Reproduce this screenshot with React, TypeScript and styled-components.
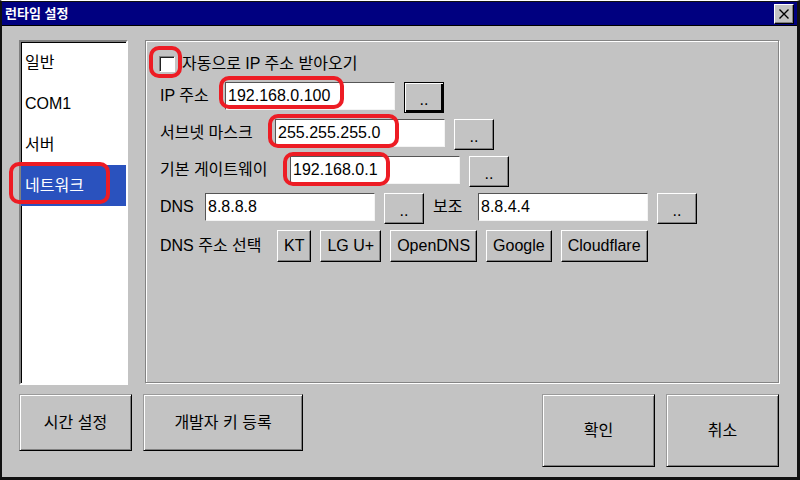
import styled, { createGlobalStyle } from 'styled-components';

const GlobalStyle = createGlobalStyle`
    html, body {
        margin: 0;
        padding: 0;
        background: #c3c3c3;
    }
    body {
        font-family: 'Liberation Sans', 'Noto Sans CJK KR', sans-serif;
        font-size: 16px;
        color: #000;
    }
    * {
        box-sizing: border-box;
    }
`;

const RED = '#ed1c24';

interface IMarkProps {
    $l: number; // left offset in px
    $t: number; // top offset in px
    $w: number;
    $h: number;
}

interface IWidthProps {
    $w: number;
}

interface IFocusProps {
    $focused?: boolean;
}

const Window = styled.div`
    width: 800px;
    height: 480px;
    display: flex;
    flex-direction: column;

    background: #c3c3c3;
    border-top: 1px solid #fff;
    border-left: 2px solid #111;
    border-right: 3px solid #111;
    border-bottom: 3px solid #111;
    overflow: hidden;
`;

const TitleBar = styled.div`
    height: 25px;
    flex: none;
    display: flex;
    align-items: center;
    justify-content: space-between;

    padding: 0 3px 0 3px;
    background: #000080;
    border-top: 1px solid #111;
    border-bottom: 1px solid #000;
`;

const Title = styled.span`
    color: #fff;
    font-size: 13px;
    font-weight: bold;
    line-height: 16px;
`;

const CloseButton = styled.button`
    width: 20px;
    height: 20px;
    padding: 0;
    display: flex;
    align-items: center;
    justify-content: center;

    background: #c3c3c3;
    border: 1px solid;
    border-color: #fff #000 #000 #fff;
    box-shadow: inset -1px -1px 0 #808080;
`;

const Body = styled.div`
    flex: 1;
    display: flex;
    flex-direction: column;
    gap: 9px;
    padding: 14px 18px 10px 17px;
`;

const Main = styled.div`
    display: flex;
    gap: 17px;
    align-items: flex-start;
`;

const ListBox = styled.ul`
    width: 109px;
    height: 345px;
    margin: 0;
    padding: 0;
    list-style: none;

    background: #fff;
    border: 2px solid;
    border-color: #808080 #fff #fff #808080;
    box-shadow: inset 1px 1px 0 #000;
`;

const ListItem = styled.li<{ $selected?: boolean }>`
    position: relative;
    height: 41px;
    display: flex;
    align-items: center;
    padding-left: 4px;

    background: ${({ $selected }) => ($selected ? '#2a52be' : 'transparent')};
    color: ${({ $selected }) => ($selected ? '#fff' : '#000')};
    line-height: 20px;
`;

const Panel = styled.div`
    width: 634px;
    height: 343px;
    display: flex;
    flex-direction: column;
    gap: 6px;

    padding: 8px 14px;
    border: 1px solid #848484;
    box-shadow: 1px 1px 0 #fff, inset 1px 1px 0 #fff;
`;

const CheckRow = styled.label`
    height: 30px;
    display: flex;
    align-items: center;
    gap: 7px;
    margin-bottom: -3px;
    line-height: 20px;
`;

const CheckWrap = styled.span`
    position: relative;
    display: flex;
    margin-left: -1px;
`;

const CheckBox = styled.span`
    width: 16px;
    height: 16px;
    background: #fff;
    border: 1px solid;
    border-color: #808080 #fff #fff #808080;
    box-shadow: inset 1px 1px 0 #222;
`;

const Row = styled.div`
    height: 31px;
    display: flex;
    align-items: flex-start;
    gap: 9px;
`;

const Label = styled.span<IWidthProps>`
    width: ${({ $w }) => $w}px;
    flex: none;
    line-height: 28px;
    white-space: nowrap;
`;

const Field = styled.div`
    position: relative;
    display: flex;
`;

const TextBox = styled.div`
    width: 170px;
    height: 28px;
    padding: 0 2px;
    line-height: 26px;

    background: #fff;
    border: 1px solid;
    border-color: #555 #f4f4f4 #f4f4f4 #555;
    white-space: nowrap;
`;

const Mark = styled.span<IMarkProps>`
    position: absolute;
    left: ${({ $l }) => $l}px;
    top: ${({ $t }) => $t}px;
    width: ${({ $w }) => $w}px;
    height: ${({ $h }) => $h}px;

    border: 4px solid ${RED};
    border-radius: 10px;
    pointer-events: none;
`;

const SmallButton = styled.button<IFocusProps>`
    width: 40px;
    height: 31px;
    padding: 0 0 4px;
    display: flex;
    align-items: flex-end;
    justify-content: center;

    font: inherit;
    line-height: 16px;
    background: #c3c3c3;
    border: 1px solid;
    border-color: ${({ $focused }) => ($focused ? '#000' : '#fff #000 #000 #fff')};
    box-shadow: ${({ $focused }) =>
        $focused ? 'inset 1px 1px 0 #fff, inset -2px -2px 0 #000' : 'inset -1px -1px 0 #808080'};
`;

const ChoiceButton = styled.button`
    height: 32px;
    padding: 0 6px;
    display: flex;
    align-items: center;

    font: inherit;
    line-height: 20px;
    background: #c3c3c3;
    border: 1px solid;
    border-color: #fff #000 #000 #fff;
    box-shadow: inset -1px -1px 0 #808080;
`;

const Footer = styled.div`
    display: flex;
    align-items: flex-start;
    gap: 11px;
`;

const Spacer = styled.div`
    flex: 1;
`;

const BigButton = styled.button<{ $w: number; $h: number }>`
    width: ${({ $w }) => $w}px;
    height: ${({ $h }) => $h}px;
    padding: 0;

    font: inherit;
    line-height: 20px;
    background: #c3c3c3;
    border: 1px solid;
    border-color: #9a9a9a #000 #000 #9a9a9a;
    box-shadow: inset 1px 1px 0 #fff, inset -1px -1px 0 #808080;
`;

const CloseIcon = () => (
    <svg width="12" height="12" viewBox="0 0 12 12">
        <path d="M1.5 1.5 L10.5 10.5 M10.5 1.5 L1.5 10.5" stroke="#000" strokeWidth="1.4" fill="none" />
    </svg>
);

const listItems = ['일반', 'COM1', '서버', '네트워크'];

const dnsPresets = ['KT', 'LG U+', 'OpenDNS', 'Google', 'Cloudflare'];

export default function App() {
    return (
        <>
            <GlobalStyle />
            <Window>
                <TitleBar>
                    <Title>런타임 설정</Title>
                    <CloseButton aria-label="닫기">
                        <CloseIcon />
                    </CloseButton>
                </TitleBar>

                <Body>
                    <Main>
                        <ListBox>
                            {listItems.map((item) => (
                                <ListItem key={item} $selected={item === '네트워크'}>
                                    {item}
                                    {item === '네트워크' && <Mark $l={-12} $t={-3} $w={101} $h={42} />}
                                </ListItem>
                            ))}
                        </ListBox>

                        <Panel>
                            <CheckRow>
                                <CheckWrap>
                                    <CheckBox />
                                    <Mark $l={-10} $t={-10} $w={33} $h={32} />
                                </CheckWrap>
                                자동으로 IP 주소 받아오기
                            </CheckRow>

                            <Row>
                                <Label $w={56}>IP 주소</Label>
                                <Field>
                                    <TextBox>192.168.0.100</TextBox>
                                    <Mark $l={-6} $t={-6} $w={125} $h={33} />
                                </Field>
                                <SmallButton $focused>..</SmallButton>
                            </Row>

                            <Row>
                                <Label $w={106}>서브넷 마스크</Label>
                                <Field>
                                    <TextBox>255.255.255.0</TextBox>
                                    <Mark $l={-7} $t={-5} $w={131} $h={34} />
                                </Field>
                                <SmallButton>..</SmallButton>
                            </Row>

                            <Row>
                                <Label $w={121}>기본 게이트웨이</Label>
                                <Field>
                                    <TextBox>192.168.0.1</TextBox>
                                    <Mark $l={-7} $t={-4} $w={107} $h={34} />
                                </Field>
                                <SmallButton>..</SmallButton>
                            </Row>

                            <Row>
                                <Label $w={36}>DNS</Label>
                                <TextBox>8.8.8.8</TextBox>
                                <SmallButton>..</SmallButton>
                                <Label $w={36}>보조</Label>
                                <TextBox>8.8.4.4</TextBox>
                                <SmallButton>..</SmallButton>
                            </Row>

                            <Row>
                                <Label $w={108} style={{ lineHeight: '32px' }}>
                                    DNS 주소 선택
                                </Label>
                                {dnsPresets.map((name) => (
                                    <ChoiceButton key={name}>{name}</ChoiceButton>
                                ))}
                            </Row>
                        </Panel>
                    </Main>

                    <Footer>
                        <BigButton $w={113} $h={57}>
                            시간 설정
                        </BigButton>
                        <BigButton $w={160} $h={57}>
                            개발자 키 등록
                        </BigButton>
                        <Spacer />
                        <BigButton $w={113} $h={73}>
                            확인
                        </BigButton>
                        <BigButton $w={113} $h={73}>
                            취소
                        </BigButton>
                    </Footer>
                </Body>
            </Window>
        </>
    );
}
